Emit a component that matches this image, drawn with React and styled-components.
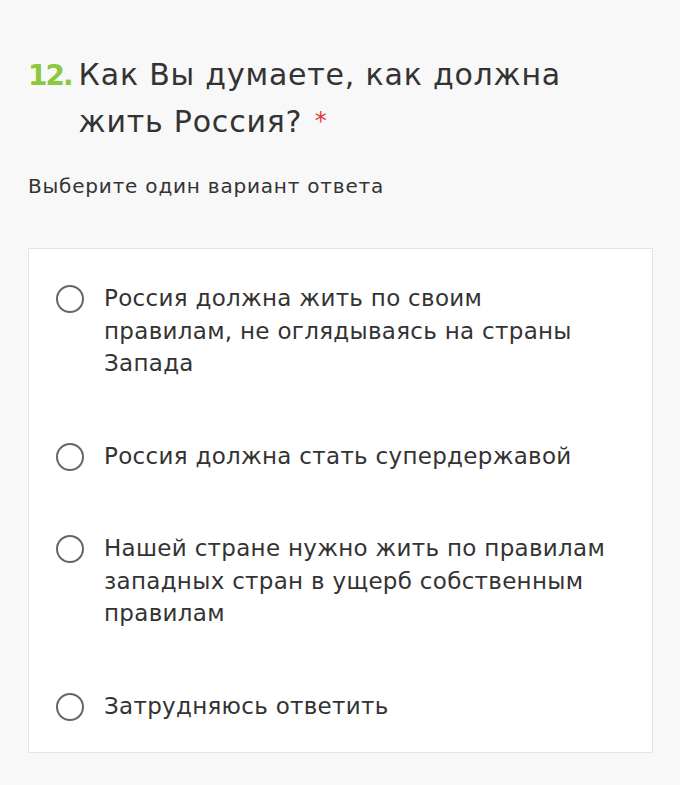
import React from 'react';
import styled, { createGlobalStyle } from 'styled-components';

const GlobalStyle = createGlobalStyle`
  html, body {
    margin: 0;
    padding: 0;
    background: #f8f8f8;
  }
  body {
    font-family: "DejaVu Sans", "Open Sans", sans-serif;
    color: #333;
  }
`;

const options = [
  'Россия должна жить по своим правилам, не оглядываясь на страны Запада',
  'Россия должна стать супердержавой',
  'Нашей стране нужно жить по правилам западных стран в ущерб собственным правилам',
  'Затрудняюсь ответить',
];

const App = () => {
  return (
    <Page>
      <GlobalStyle />
      <Question>
        <Number>12.</Number>
        <Title>
          Как Вы думаете, как должна жить Россия? <Required>*</Required>
        </Title>
      </Question>
      <Hint>Выберите один вариант ответа</Hint>
      <Card>
        {options.map((text, index) => (
          <Option key={index}>
            <Radio />
            <OptionText>{text}</OptionText>
          </Option>
        ))}
      </Card>
    </Page>
  );
};

const Page = styled.div`
  padding: 52px 27px 32px 28px;
`;
const Question = styled.div`
  display: flex;
  align-items: baseline;
  gap: 7px;
`;
const Number = styled.span`
  color: #8dc63f;
  font-size: 28px;
  font-weight: 700;
  letter-spacing: -2px;
`;
const Title = styled.h2`
  margin: 0;
  width: 520px;
  font-size: 30px;
  font-weight: 400;
  line-height: 46px;
  letter-spacing: 0.8px;
  color: #333;
`;
const Required = styled.span`
  margin-left: 2px;
  color: #e53935;
  font-size: 24px;
  vertical-align: 3px;
`;
const Hint = styled.p`
  margin: 28px 0 0;
  font-size: 20px;
  line-height: 26px;
  letter-spacing: 0.8px;
  color: #333;
`;
const Card = styled.div`
  margin-top: 49px;
  background: #fff;
  border: 1px solid #e4e4e4;
  padding: 33px 28px 30px 27px;
  display: flex;
  flex-direction: column;
  gap: 60px;
`;
const Option = styled.label`
  display: flex;
  align-items: flex-start;
  gap: 20px;
`;
const Radio = styled.span`
  flex: none;
  width: 24px;
  height: 24px;
  margin-top: 3px;
  border: 2px solid #666;
  border-radius: 50%;
`;
const OptionText = styled.span`
  max-width: 505px;
  font-size: 23px;
  line-height: 32.5px;
  letter-spacing: 0.3px;
  color: #333;
`;

export default App;
